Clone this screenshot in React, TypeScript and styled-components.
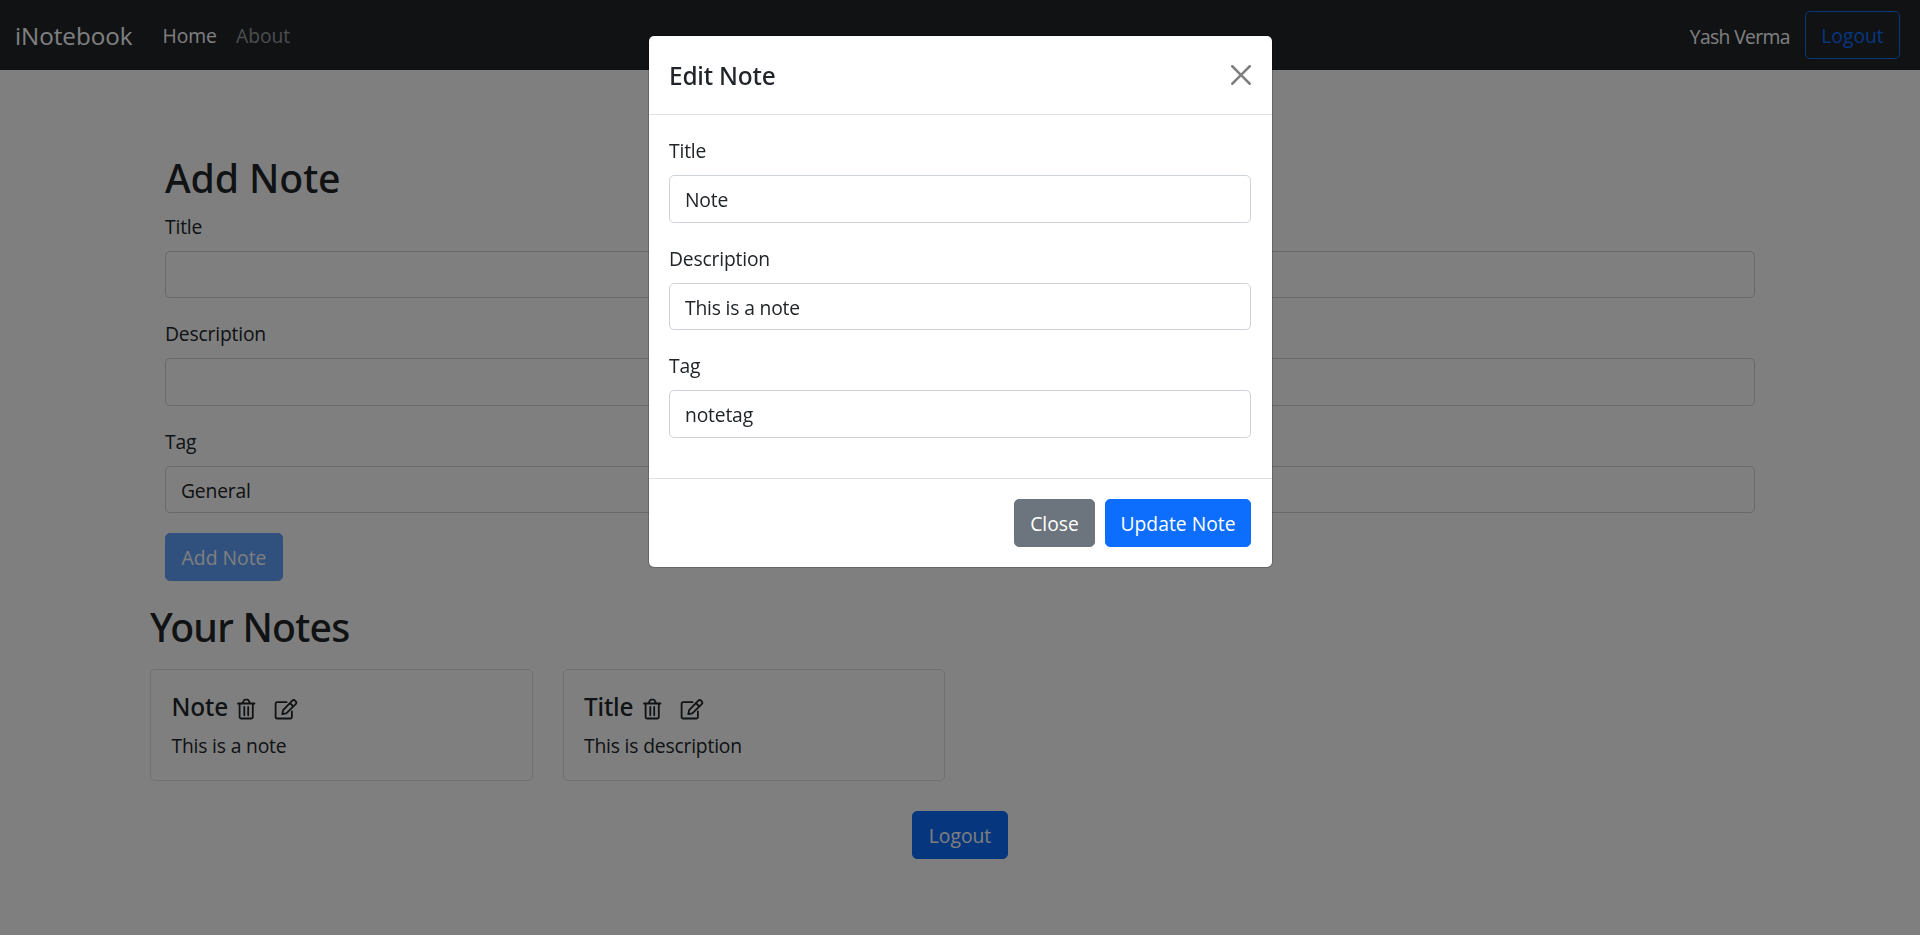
import React from "react";
import styled, { createGlobalStyle, css } from "styled-components";

const GlobalStyle = createGlobalStyle`
  *, *::before, *::after { box-sizing: border-box; }
  html { font-size: 20px; }
  body {
    margin: 0;
    min-height: 100vh;
    background: #fff;
    color: #212529;
    font-family: "Open Sans", "Noto Sans", sans-serif;
    font-size: 19.3px;
    line-height: 30px;
    letter-spacing: -0.18px;
    overflow: hidden;
  }
  h1, h2, h5, p { margin: 0; }
`;

const medium = css`
  font-family: "Noto Sans", sans-serif;
  font-weight: 500;
`;

const Navbar = styled.nav`
  display: flex;
  align-items: center;
  height: 70px;
  padding: 0 20px 0 15px;
  background: #212529;
`;

const Brand = styled.a`
  margin-right: 20px;
  padding-top: 1px;
  width: 117.5px;
  color: #fff;
  font-size: 24.2px;
  letter-spacing: -0.03px;
  white-space: nowrap;
`;

const NavLink = styled.a<{ $active?: boolean }>`
  width: ${p => (p.$active ? 73.5 : 77)}px;
  padding: 1px 10px 0;
  color: ${p => (p.$active ? "#fff" : "rgba(255, 255, 255, 0.55)")};
  letter-spacing: -0.05px;
`;

const UserName = styled.span`
  margin-left: auto;
  margin-right: 15px;
  padding-top: 3px;
  color: #fff;
  letter-spacing: -0.6px;
`;

type Variant = "primary" | "secondary" | "outline";

const variants = {
  primary: css`background: #0d6efd; border-color: #0d6efd; color: #fff;`,
  secondary: css`background: #6c757d; border-color: #6c757d; color: #fff;`,
  outline: css`background: transparent; border-color: #0d6efd; color: #0d6efd;`,
};

const Button = styled.button<{ $variant?: Variant; $width: number }>`
  width: ${p => p.$width}px;
  height: 47.5px;
  padding: 2px 0 0;
  border: 1px solid;
  border-radius: 5px;
  font: inherit;
  letter-spacing: 0.02px;
  text-align: center;
  white-space: nowrap;
  ${p => variants[p.$variant ?? "primary"]}
  &:disabled { opacity: 0.65; }
`;

const Container = styled.main`
  display: flex;
  flex-direction: column;
  width: 1620px;
  margin: 0 auto;
  padding-top: 82px;
`;

const AddForm = styled.form`
  display: flex;
  flex-direction: column;
  align-items: flex-start;
  padding: 0 15px;
`;

const Heading = styled.h2<{ $tight?: boolean }>`
  ${medium}
  height: 48px;
  font-size: 39.2px;
  line-height: 52px;
  letter-spacing: ${p => (p.$tight ? -0.75 : -0.1)}px;
`;

const FormHeading = styled(Heading)`
  margin-bottom: 10.5px;
`;

const Field = styled.div`
  width: 100%;
  margin-bottom: 20px;
`;

const Label = styled.label`
  display: block;
  height: 30px;
  margin-bottom: 10px;
  line-height: 32px;
`;

const Input = styled.input`
  display: block;
  width: 100%;
  height: 47.5px;
  padding: 2px 15px 0;
  border: 1px solid #ced4da;
  border-radius: 5px;
  background: #fff;
  color: #212529;
  font: inherit;
  letter-spacing: -0.18px;
  outline: none;
`;

const Notes = styled.section`
  display: flex;
  flex-direction: column;
  gap: 20px;
  margin-top: 20px;
`;

const CardRow = styled.div`
  display: grid;
  grid-template-columns: repeat(4, 382.5px);
  gap: 30px;
`;

const Card = styled.article`
  height: 112.5px;
  padding: 20px 20px 20px 20.5px;
  border: 1px solid rgba(0, 0, 0, 0.125);
  border-radius: 5px;
`;

const CardHead = styled.div`
  display: flex;
  height: 30px;
  margin-bottom: 10px;
`;

const CardTitle = styled.h5<{ $width: number }>`
  ${medium}
  width: ${p => p.$width}px;
  font-size: 24.4px;
  line-height: 33px;
`;

const CardText = styled.p`
  line-height: 32px;
`;

const Icon = styled.svg`
  flex: none;
  margin-top: 8px;
  margin-right: 18px;
  fill: none;
  stroke: #212529;
  stroke-width: 1.8;
  stroke-linejoin: round;
  stroke-linecap: round;
`;

const LogoutRow = styled.div`
  display: flex;
  justify-content: center;
  margin-top: 30px;
`;

const Backdrop = styled.div`
  position: fixed;
  inset: 0;
  background: rgba(0, 0, 0, 0.5);
`;

const Dialog = styled.div`
  position: fixed;
  top: 35px;
  left: 648px;
  width: 625px;
  border: 1px solid rgba(0, 0, 0, 0.2);
  border-radius: 6px;
  background: #fff;
  background-clip: padding-box;
`;

const DialogHeader = styled.header`
  display: flex;
  align-items: center;
  justify-content: space-between;
  height: 79px;
  padding: 0 21px 0 20px;
  border-bottom: 1px solid #dee2e6;
`;

const DialogTitle = styled.h5`
  ${medium}
  padding-top: 2px;
  font-size: 24.4px;
  line-height: 37.5px;
`;

const DialogBody = styled.div`
  padding: 20px 21px 20px 20px;
`;

const DialogFooter = styled.footer`
  display: flex;
  justify-content: flex-end;
  gap: 10px;
  padding: 20.5px 21px 20px 20px;
  border-top: 1px solid #dee2e6;
`;

const CloseIcon = styled.svg`
  width: 20px;
  height: 20px;
  margin-top: -1px;
  opacity: 0.5;
`;

const TrashIcon = () => (
  <Icon width="19" height="22" viewBox="0 0 19 22">
    <path d="M1 5.5h16.5M5.6 5.2l1.2-2.600a1.500 1.500 0 0 1 1.300-.9h2.400a1.500 1.500 0 0 1 1.300.9l1.200 2.600M2.600 5.700v13.400a1.400 1.400 0 0 0 1.400 1.400h10.400a1.400 1.400 0 0 0 1.400-1.400V5.700M7.300 9v8.300M11.200 9v8.300" />
  </Icon>
);

const EditIcon = () => (
  <Icon width="24" height="22" viewBox="0 0 24 22">
    <path d="M12.6 4.2H3a1.4 1.4 0 0 0-1.4 1.4v13.5A1.4 1.4 0 0 0 3 20.5h13.5a1.4 1.4 0 0 0 1.4-1.4v-5.6" />
    <path d="M8.3 16.2l.8-4L18.3 2.7a2 2 0 0 1 2.8 0l.6.6a2 2 0 0 1 0 2.800L12.300 15.400zM16 5.200l3.300 3.300" />
  </Icon>
);

const FormField = ({ label, value }: { label: string; value: string }) => (
  <Field>
    <Label>{label}</Label>
    <Input aria-label={label} value={value} readOnly />
  </Field>
);

const notes = [
  { title: "Note", text: "This is a note", titleWidth: 65.5 },
  { title: "Title", text: "This is description", titleWidth: 58.5 },
];

export default function App() {
  return (
    <>
      <GlobalStyle />
      <Navbar>
        <Brand>iNotebook</Brand>
        <NavLink $active>Home</NavLink>
        <NavLink>About</NavLink>
        <UserName>Yash Verma</UserName>
        <Button $variant="outline" $width={95}>Logout</Button>
      </Navbar>
      <Container>
        <AddForm>
          <FormHeading>Add Note</FormHeading>
          <FormField label="Title" value="" />
          <FormField label="Description" value="" />
          <FormField label="Tag" value="General" />
          <Button type="button" disabled $width={118}>Add Note</Button>
        </AddForm>
        <Notes>
          <Heading $tight>Your Notes</Heading>
          <CardRow>
            {notes.map(note => (
              <Card key={note.title}>
                <CardHead>
                  <CardTitle $width={note.titleWidth}>{note.title}</CardTitle>
                  <TrashIcon />
                  <EditIcon />
                </CardHead>
                <CardText>{note.text}</CardText>
              </Card>
            ))}
          </CardRow>
        </Notes>
        <LogoutRow>
          <Button $width={96}>Logout</Button>
        </LogoutRow>
      </Container>
      <Backdrop />
      <Dialog role="dialog">
        <DialogHeader>
          <DialogTitle>Edit Note</DialogTitle>
          <CloseIcon viewBox="0 0 16 16">
            <path d="M.293.293a1 1 0 011.414 0L8 6.586 14.293.293a1 1 0 111.414 1.414L9.414 8l6.293 6.293a1 1 0 01-1.414 1.414L8 9.414l-6.293 6.293a1 1 0 01-1.414-1.414L6.586 8 .293 1.707a1 1 0 010-1.414z" />
          </CloseIcon>
        </DialogHeader>
        <DialogBody>
          <FormField label="Title" value="Note" />
          <FormField label="Description" value="This is a note" />
          <FormField label="Tag" value="notetag" />
        </DialogBody>
        <DialogFooter>
          <Button $variant="secondary" $width={81}>Close</Button>
          <Button $width={146}>Update Note</Button>
        </DialogFooter>
      </Dialog>
    </>
  );
}
